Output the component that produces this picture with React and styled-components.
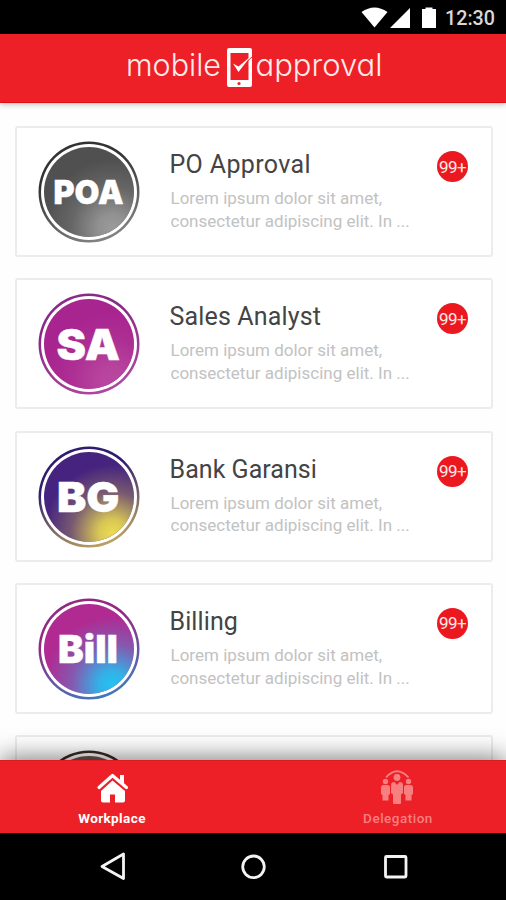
import React from 'react';
import styled, { createGlobalStyle } from 'styled-components';

const GlobalStyle = createGlobalStyle`
  * {
    box-sizing: border-box;
  }

  body {
    margin: 0;
    background: #fff;
    font-family: Roboto, 'Liberation Sans', sans-serif;
  }

  svg {
    display: block;
  }
`;

const Screen = styled.div`
  display: flex;
  flex-direction: column;
  width: 506px;
  height: 900px;
  overflow: hidden;
  background: #fefefe;
`;

const StatusBar = styled.div`
  flex: none;
  display: flex;
  justify-content: flex-end;
  height: 34px;
  background: #000;
`;

const Header = styled.header`
  flex: none;
  display: flex;
  justify-content: center;
  height: 69px;
  background: #ed2027;
  border-bottom: 1px solid #e01018;
  box-shadow: 0 1px 6px rgba(0, 0, 0, 0.3);
  z-index: 1;
`;

const List = styled.main`
  flex: none;
  display: flex;
  flex-direction: column;
  gap: 21.3px;
  height: 656.5px;
  padding: 23px 13.5px 0 14.5px;
  overflow: hidden;
`;

const Card = styled.article`
  flex: none;
  display: flex;
  height: 131px;
  padding: 13px 22.5px 0 21.5px;
  background: #fff;
  border: 2px solid #ececec;
  border-radius: 3px;
`;

const CardBody = styled.div`
  flex: 1;
  padding: 9px 0 0 29.5px;
`;

const CardTitle = styled.h2`
  margin: 0;
  color: #444;
  font-size: 25px;
  font-weight: 400;
  line-height: 30px;
  letter-spacing: ${({ $spacing }) => $spacing}px;
  white-space: nowrap;
`;

const CardText = styled.p`
  margin: 7px 0 0 1px;
  color: #c2c2c2;
  font-size: 17px;
  line-height: 22.7px;
  letter-spacing: 0.01px;
  white-space: nowrap;
`;

const Counter = styled.span`
  display: flex;
  align-items: center;
  justify-content: center;
  width: 31px;
  height: 31px;
  margin-top: 10px;
  border-radius: 50%;
  background: #ec1820;
  color: #ffe9e9;
  font-size: 17px;
  letter-spacing: -0.6px;
`;

const TabBar = styled.nav`
  flex: none;
  display: flex;
  justify-content: space-between;
  height: 73.5px;
  padding: 0 50px 0 54px;
  background: #ed2027;
  border-top: 1px solid #df1a1f;
  box-shadow: 0 -3px 24px rgba(0, 0, 0, 0.5);
  z-index: 1;
`;

const Tab = styled.div`
  display: flex;
  flex-direction: column;
  align-items: center;
  width: 116px;
  padding-top: 8px;
  color: ${({ $active }) => ($active ? '#fff' : '#f77f80')};
  font-size: 13.5px;
  font-weight: ${({ $active }) => ($active ? 700 : 500)};
  line-height: 16px;
  letter-spacing: ${({ $active }) => ($active ? 0.4 : 0.5)}px;
`;

const TabIcon = styled.svg`
  margin-bottom: 5px;
`;

const SystemNav = styled.div`
  flex: none;
  display: flex;
  justify-content: center;
  height: 67px;
  background: #000;
`;

const items = [
  {
    id: 'poa',
    name: 'PO Approval',
    label: 'POA',
    spacing: 0.35,
    text: { x: 15.5, y: 63, width: 70, size: 33 },
    glow: '#9a9a9a',
    base: '#505050',
    rim: ['#333', '#888'],
  },
  {
    id: 'sa',
    name: 'Sales Analyst',
    label: 'SA',
    spacing: 0.15,
    text: { x: 18.5, y: 67, width: 63.5, size: 42 },
    glow: '#b9479f',
    base: '#a8248f',
    rim: ['#8a2a86', '#b0489f'],
  },
  {
    id: 'bg',
    name: 'Bank Garansi',
    label: 'BG',
    spacing: 0.05,
    text: { x: 19, y: 66, width: 62.5, size: 41 },
    glow: '#ecdc50',
    base: '#46237f',
    rim: ['#2f1b70', '#c3a95f'],
  },
  {
    id: 'bill',
    name: 'Billing',
    label: 'Bill',
    spacing: 0.1,
    text: { x: 20, y: 64.5, width: 60, size: 38 },
    glow: '#22c3f3',
    base: '#b02a92',
    rim: ['#93287f', '#3d7cc0'],
  },
  {
    id: 'last',
    name: '',
    label: '',
    spacing: 0,
    glow: '#7a5a48',
    base: '#6a5a50',
    rim: ['#3b2a22', '#6a5040'],
  },
];

const Badge = ({ id, label, text, base, glow, rim }) => (
  <svg width="102" height="102" viewBox="0 0 102 102">
    <defs>
      <radialGradient id={`${id}-fill`} cx="0.76" cy="0.9" r="0.76">
        <stop offset="0" stopColor={glow} />
        <stop offset="0.2" stopColor={glow} stopOpacity="0.88" />
        <stop offset="0.6" stopColor={glow} stopOpacity="0.3" />
        <stop offset="1" stopColor={glow} stopOpacity="0" />
      </radialGradient>
      <linearGradient id={`${id}-rim`} x1="0.3" y1="0" x2="0.7" y2="1">
        <stop offset="0.3" stopColor={rim[0]} />
        <stop offset="1" stopColor={rim[1]} />
      </linearGradient>
    </defs>
    <circle cx="51" cy="51" r="50.5" fill={`url(#${id}-rim)`} />
    <circle cx="51" cy="51" r="48" fill="#fff" />
    <circle cx="51" cy="51" r="45" fill={base} />
    <circle cx="51" cy="51" r="45" fill={`url(#${id}-fill)`} />
    {label && (
      <text
        x={text.x}
        y={text.y}
        textLength={text.width}
        lengthAdjust="spacingAndGlyphs"
        fill="#fff"
        stroke="#fff"
        strokeWidth="0.4"
        fontFamily="Inter, 'Liberation Sans', sans-serif"
        fontWeight="900"
        fontSize={text.size}>
        {label}
      </text>
    )}
  </svg>
);

const StatusIcons = () => (
  <svg width="150" height="34" viewBox="356 0 150 34" fill="#fff">
    <path d="M361.5 12Q374.5 3 387.5 12L374.5 27.5Z" />
    <path d="M410 8V28H390Z" />
    <path d="M422 9h3.5V7.5h7V9h3.5v19h-14z" />
    <text
      x="445"
      y="24.5"
      textLength="50"
      lengthAdjust="spacingAndGlyphs"
      fill="#d8d8d8"
      fontFamily="Roboto, sans-serif"
      fontWeight="500"
      fontSize="20">
      12:30
    </text>
  </svg>
);

const LogoText = styled.text`
  fill: #ffecea;
  font-family: Inter, Lato, sans-serif;
  font-size: 31px;
  font-weight: 350;
  font-feature-settings: 'cv11';
`;

const Logo = () => (
  <svg width="270" height="68" viewBox="118 34 270 68">
    <LogoText x="126" y="76" textLength="95" lengthAdjust="spacingAndGlyphs">
      mobile
    </LogoText>
    <path
      fill="#fff"
      fillRule="evenodd"
      d="M229 48h21a2 2 0 0 1 2 2v35a2 2 0 0 1-2 2h-21a2 2 0 0 1-2-2V50a2 2 0 0 1 2-2zM230.5 53v27h18V53z"
    />
    <path
      d="M247.5 61L252.500 56.500"
      stroke="#ed2027"
      strokeWidth="1"
    />
    <path fill="#fff" d="M233 63.5l5.5 3L250.5 56.5l-12 15.5z" />
    <circle cx="239" cy="83.5" r="1.6" fill="#ed2027" />
    <LogoText x="255.5" y="76" textLength="127" lengthAdjust="spacingAndGlyphs">
      approval
    </LogoText>
  </svg>
);

const HomeIcon = () => (
  <TabIcon width="36" height="36" viewBox="0 0 36 36">
    <path
      d="M5 18.5L18.500 6.500L32.500 18.500"
      fill="none"
      stroke="currentColor"
      strokeWidth="3.2"
      strokeLinecap="round"
      strokeLinejoin="round"
    />
    <path fill="currentColor" d="M26 6h4v10l-4-3.5z" />
    <path
      fill="currentColor"
      d="M18.5 11.5L31 22v9.5a2 2 0 0 1-2 2H21v-8h-5v8H9a2 2 0 0 1-2-2v-9.5z"
    />
  </TabIcon>
);

const TeamIcon = () => (
  <TabIcon width="36" height="36" viewBox="0 0 36 36" fill="currentColor">
    <path
      d="M6 8.5Q17 -4 28.5 8.5"
      fill="none"
      stroke="currentColor"
      strokeWidth="1.8"
    />
    <circle cx="17" cy="8.5" r="3.4" />
    <path d="M14.500 13L17 16l2.500-3q3.500 0 3.500 3v8l-2 1.500V34q0 1-1 1h-6q-1 0-1-1v-8.500l-2-1.500v-8q0-3 3.500-3z" />
    <circle cx="5.5" cy="12.500" r="2.7" />
    <path d="M3.5 16h4q2.500 0 2.500 2.500V25l-1.500 1v5.500h-6V26L1 25v-6.500Q1 16 3.500 16z" />
    <circle cx="28.5" cy="12.5" r="2.7" />
    <path d="M26.5 16h4q2.500 0 2.500 2.500V25l-1.500 1v5.500h-6V26L24 25v-6.500q0-2.500 2.500-2.500z" />
  </TabIcon>
);

const NavIcons = () => (
  <svg
    width="506"
    height="67"
    viewBox="0 833 506 67"
    fill="none"
    stroke="#f4f4f4"
    strokeWidth="2.8"
    strokeLinejoin="round">
    <path d="M123.5 854V878.5L102 866.5Z" />
    <circle cx="253.5" cy="866.8" r="10.8" />
    <rect x="385.5" y="856.5" width="20.5" height="20.5" rx="1" />
  </svg>
);

const App = () => {
  return (
    <>
      <GlobalStyle />
      <Screen>
        <StatusBar>
          <StatusIcons />
        </StatusBar>
        <Header>
          <Logo />
        </Header>
        <List>
          {items.map(item => (
            <Card key={item.id}>
              <Badge {...item} />
              {item.name && (
                <>
                  <CardBody>
                    <CardTitle $spacing={item.spacing}>{item.name}</CardTitle>
                    <CardText>
                      Lorem ipsum dolor sit amet,
                      <br />
                      consectetur adipiscing elit. In ...
                    </CardText>
                  </CardBody>
                  <Counter>99+</Counter>
                </>
              )}
            </Card>
          ))}
        </List>
        <TabBar>
          <Tab $active>
            <HomeIcon />
            Workplace
          </Tab>
          <Tab>
            <TeamIcon />
            Delegation
          </Tab>
        </TabBar>
        <SystemNav>
          <NavIcons />
        </SystemNav>
      </Screen>
    </>
  );
};

export default App;
